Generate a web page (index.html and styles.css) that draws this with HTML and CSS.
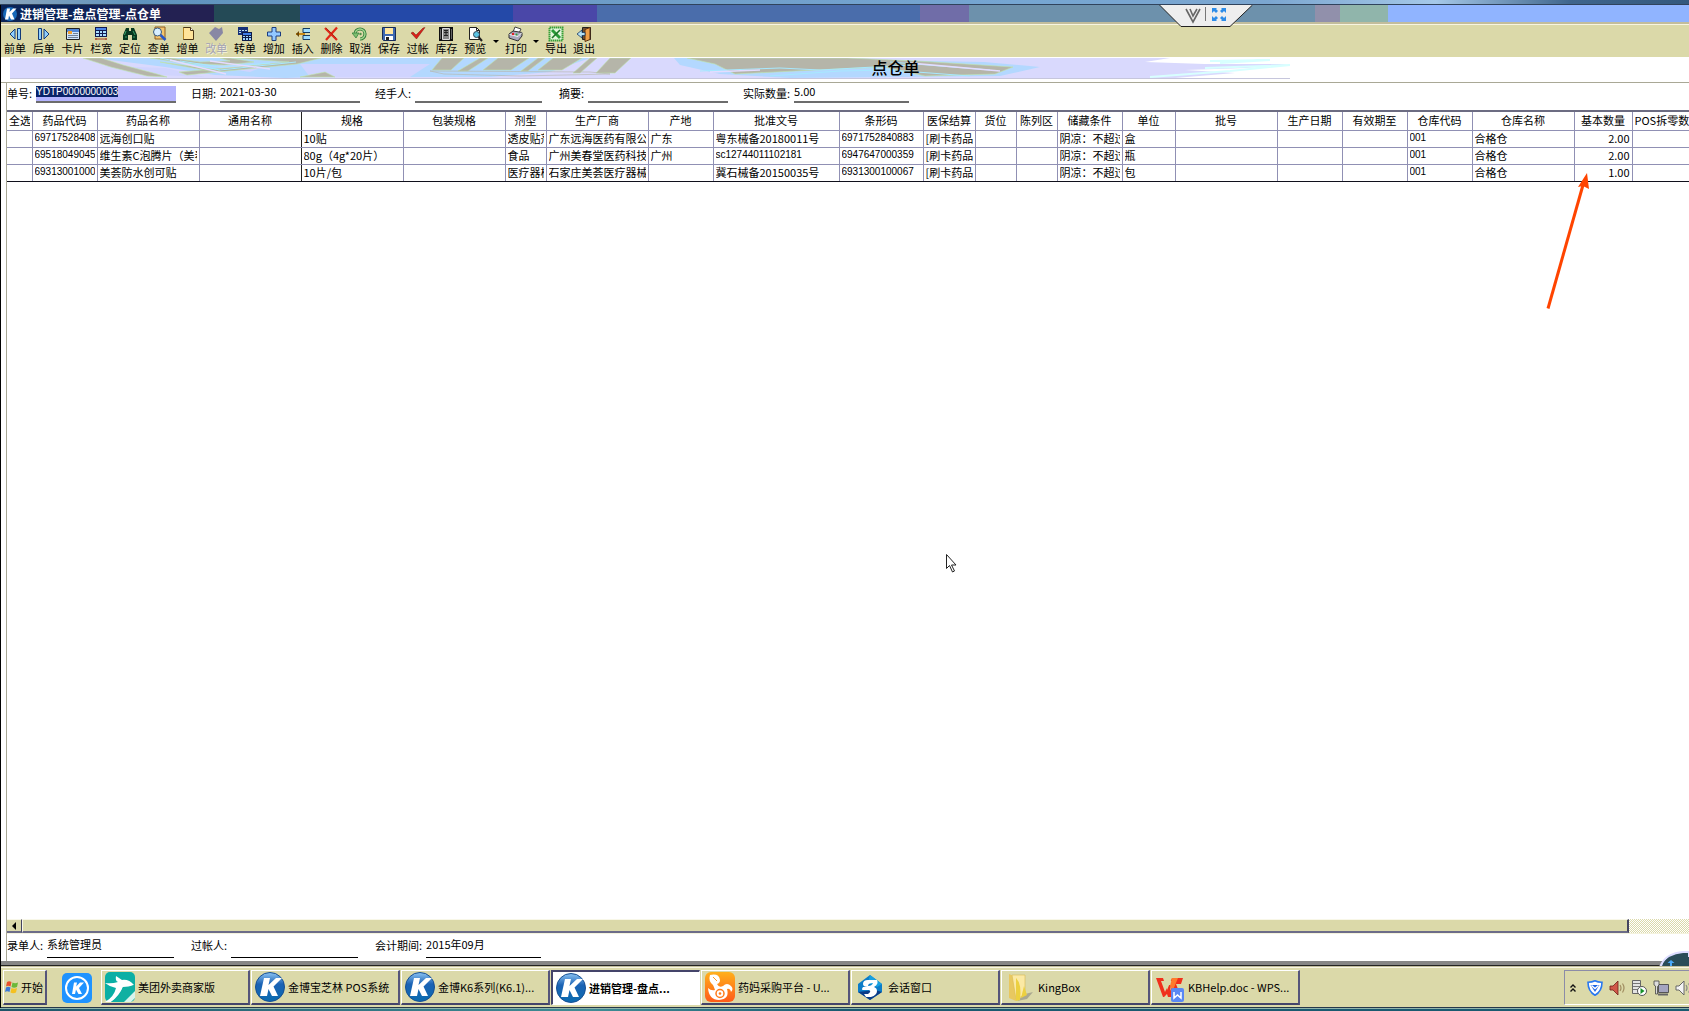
FILE: index.html
```
<!DOCTYPE html>
<html lang="zh-CN">
<head>
<meta charset="utf-8">
<title>进销管理-盘点管理-点仓单</title>
<link rel="stylesheet" href="styles.css">
</head>
<body>
<svg class="defs" aria-hidden="true">
  <defs>
    <linearGradient id="kblue" x1="0" y1="0" x2="0" y2="1"><stop offset="0" stop-color="#8cc4f4"/><stop offset=".4" stop-color="#1b62b4"/><stop offset="1" stop-color="#0a6cb0"/></linearGradient>
    <linearGradient id="orange" x1="0" y1="0" x2="0" y2="1"><stop offset="0" stop-color="#ffb01c"/><stop offset="1" stop-color="#ff5a18"/></linearGradient>
    <symbol id="kball" viewBox="0 0 30 30">
      <circle cx="15" cy="15" r="14.5" fill="url(#kblue)" stroke="#174f92"/>
      <path d="M9 6h6l-1.500 7L21 6h6l-8.500 8.500L23 24h-6l-3.500-7-1.500 7H5z" fill="#fff"/>
    </symbol>
  </defs>
</svg>
<div class="desktop-strip"></div>
<div class="window">
  <header class="titlebar">
    <svg class="title-icon" viewBox="0 0 14 14"><circle cx="7" cy="7" r="7" fill="#1768b8"/><path d="M4 1.500h3L6.500 5 10 1.500h3.500L9 6.500l2.500 6H8L6 8.500l-.7 4H2z" fill="#fff"/></svg>
    <h1>进销管理-盘点管理-点仓单</h1>
  </header>

  <nav class="toolbar">
    <div class="tool-group">
      <button class="tool"><svg viewBox="0 0 16 16"><path d="M8 3v10L3 8z" fill="#8fd0ff" stroke="#123a78"/><path d="M10.500 2.500h3v11h-3z" fill="#8fd0ff" stroke="#123a78"/></svg>前单</button>
      <button class="tool"><svg viewBox="0 0 16 16"><path d="M8 3v10l5-5z" fill="#8fd0ff" stroke="#123a78"/><path d="M2.500 2.500h3v11h-3z" fill="#8fd0ff" stroke="#123a78"/></svg>后单</button>
      <button class="tool"><svg viewBox="0 0 16 16"><path d="M1.500 2.500h13v11h-13z" fill="#cfe4fb" stroke="#222"/><path d="M2 3h12v3H2z" fill="#4f86d8"/><path d="M3 5h4v3H3z" fill="#f0a030"/><path d="M8 7.500h5M3 9.500h10M3 11.500h10" stroke="#6f8098"/></svg>卡片</button>
      <button class="tool"><svg viewBox="0 0 16 16"><path d="M2 1h12v10H2z" fill="#111a50"/><path d="M3 2h10v2H3z" fill="#4c86e8"/><path d="M3 5h3v2H3zm4 0h2v2H7zm3 0h3v2h-3zM3 8h3v2H3zm4 0h2v2H7zm3 0h3v2h-3z" fill="#a8dcff"/><path d="M2 13h12M3 12v2M13 12v2" stroke="#a23a20"/></svg>栏宽</button>
      <button class="tool"><svg viewBox="0 0 16 16"><path d="M4 2h3v3h2V2h3l3 7v5h-5V9H6v5H1V9z" fill="#083820"/><path d="M4 5 2.500 9M11 5l2 4M3 11h2M11 11h2" stroke="#35a068"/></svg>定位</button>
      <button class="tool"><svg viewBox="0 0 16 16"><path d="M4 1h10v12H4z" fill="#f5c56c" stroke="#8a5a20"/><circle cx="6.500" cy="6" r="4" fill="#d8efff" stroke="#35587c"/><path d="m9.500 9 5 5" stroke="#2858c8" stroke-width="2.500"/></svg>查单</button>
      <button class="tool"><svg viewBox="0 0 16 16"><path d="M3.500 1.500h7l3 3v9h-10z" fill="#ffe49a" stroke="#4c3818"/><path d="M3.500 2v11" stroke="#b88420"/><path d="M10.500 1.500v3h3" fill="#fff" stroke="#4c3818"/></svg>增单</button>
      <button class="tool off" disabled><svg viewBox="0 0 16 16"><path d="m1 7 6-6 4 2 3-2 1 6-7 8z" fill="#8988a4"/></svg>改单</button>
      <button class="tool"><svg viewBox="0 0 16 16"><path d="M1 1h10v8H1z" fill="#163078"/><path d="M2 4h2v1H2zm3 0h2v1H5zm3 0h2v1H8zM2 6h2v1H2zm3 0h2v1H5z" fill="#bde"/><path d="M5 6h10v9H5z" fill="#0e1c48"/><path d="M6 7h8v2H6z" fill="#3f7de8"/><path d="M6 10h2v1H6zm3 0h2v1H9zm3 0h2v1h-2zM6 12h2v2H6zm3 0h2v2H9zm3 0h2v2h-2z" fill="#9ed4ff"/></svg>转单</button>
      <button class="tool"><svg viewBox="0 0 16 16"><path d="M6 1.500h4V6h4.500v4H10v4.500H6V10H1.500V6H6z" fill="#92c8ff" stroke="#1a3c80"/></svg>增加</button>
      <button class="tool"><svg viewBox="0 0 16 16"><path d="M15 2.500H8v4h7M15 9.500H8v4h7" fill="#9edcff" stroke="#143a60"/><path d="M1 8h9" stroke="#c88a18" stroke-width="2"/><path d="M4 5v6L1 8z" fill="#6b4808"/></svg>插入</button>
      <button class="tool"><svg viewBox="0 0 16 16"><path d="m2 2 12 12M14 1.500 3 14" stroke="#e02818" stroke-width="2.200"/><path d="m3 2 10 10" stroke="#8c1810" stroke-width=".6"/></svg>删除</button>
      <button class="tool"><svg viewBox="0 0 16 16"><path d="M3 8a5 5 0 1 1 5 5" fill="none" stroke="#2d7a38" stroke-width="3.200"/><path d="M3 8a5 5 0 1 1 5 5" fill="none" stroke="#a5d890" stroke-width="1.400"/><path d="M0 7h7l-3 5z" fill="#7fbf70" stroke="#2d7a38" stroke-width=".7"/><circle cx="8.500" cy="8" r="1.200" fill="#4f9048"/></svg>取消</button>
      <button class="tool"><svg viewBox="0 0 16 16"><path d="M1.500 1.500h13v13h-12l-1-1z" fill="#3e68b0" stroke="#182c58"/><path d="M4 2h8v6H4z" fill="#ffe6a0"/><path d="M4 10h8v4H4z" fill="#fff"/><path d="M5 11h3v3H5z" fill="#222"/></svg>保存</button>
      <button class="tool"><svg viewBox="0 0 16 16"><path d="m1 7 2-1 3 3 7-7 2-.5L6.500 13z" fill="#d82018" stroke="#7a1810" stroke-width=".5"/></svg>过帐</button>
      <button class="tool"><svg viewBox="0 0 16 16"><path d="M1 1h14v14H1z" fill="#101010"/><path d="M4.500 2.500h7v11h-7z" fill="#888" stroke="#ddd"/><path d="M6 4.500h4M6 6.500h4M6 9.500h4M8 4v5" stroke="#222"/><path d="M2.500 3v10M13.500 3v10" stroke="#666"/></svg>库存</button>
      <button class="tool"><svg viewBox="0 0 16 16"><path d="M2.500 1.500h7l3 3v9h-10z" fill="#fff" stroke="#222"/><path d="M9.500 1.500v3h3" fill="none" stroke="#222"/><circle cx="9.500" cy="8.500" r="3" fill="#5cc4e4" stroke="#345"/><path d="m11.500 11 3.500 4" stroke="#222" stroke-width="2"/></svg>预览</button>
    </div>
    <button class="drop" aria-label="预览选项"></button>
    <button class="tool"><svg viewBox="0 0 16 16"><path d="m5 6 2-5 6 2-2 4z" fill="#fff" stroke="#444"/><path d="m1 8 4-3 9 1.500V10l-4 5-9-3z" fill="#a8a8bc" stroke="#333"/><path d="m1.500 8.500 8.500 2 4-4" stroke="#f4f4f4" fill="none"/><circle cx="5" cy="8" r="1.200" fill="#e02020"/><circle cx="8.500" cy="8.500" r="1" fill="#28a838"/></svg>打印</button>
    <button class="drop" aria-label="打印选项"></button>
    <button class="tool"><svg viewBox="0 0 16 16"><path d="M1.500 1.500h13v13h-13z" fill="#e4f6dc" stroke="#38a038" stroke-width="2" stroke-dasharray="1.500 .5"/><path d="m4 4 8 8" stroke="#2a9a38" stroke-width="3"/><path d="m12 4-8 8" stroke="#1c7428" stroke-width="1.600"/></svg>导出</button>
    <button class="tool"><svg viewBox="0 0 16 16"><path d="M6.500 1.500h8v12h-8z" fill="#705030" stroke="#222"/><path d="m9 3.500 5-2v12l-5 2z" fill="#f0a048" stroke="#5a3010"/><path d="M6 4 1 8l5 4v-2.500h3v-3H6z" fill="#b4e0f4" stroke="#1a3a60" stroke-width=".8"/></svg>退出</button>
  </nav>

  <div class="banner">
    <svg class="banner-art" viewBox="0 0 1280 20" preserveAspectRatio="none" aria-hidden="true">
      <path d="M0 0h1160l-25 4 60 2h85l-45 4-60 2 50 3-60 5H0z" fill="#d9d9fd"/>
      <path d="M85 0h400l-20 8-80 8-110 4-70-3-50-8zM330 0h250l-40 14-60 5-100 0zM664 0h90l220 4 56 5-40 9-210 2-70-4-40-9z" fill="#b3d8ff"/>
      <path d="M290 6h130l-20 13H300zM95 8l60 2 40 9-70-3zM200 8l60-2-20 8z" fill="#d0d4fe"/>
      <g fill="#b5b5a9" stroke="#bfe6ac" stroke-width=".6">
        <path d="M73 0h18l22 7 34 9 10 3-20-1-36-9z"/>
        <path d="m140 0 34 5 40 2 30-3-24-4h-10l10 3-30 1-30-4zM225 0h86l-24 6-60 6-50 5-8-3 60-5 50-5z"/>
        <path d="m290 19 25-5 10 5zM150 4l60 8-5 2z"/>
        <path d="M432 0h22l-13 12h-19z"/>
        <path d="M470 0h8l-20 13h-10zM488 0h31l-18 12h-28zM528 0h7l-17 13h-7zM543 0h29l-20 12h-24zM580 0h7l-17 15h-7zM600 0h21l-16 15h-19z"/>
        <path d="m420 13 160 1 20 2-90 2-76-2z" fill="none" stroke="#b5b5a9"/>
        <path d="M677 0h160l70 3 96 6-18 7-70 2-40-9-70 3-80 4-20-10z"/>
      </g>
      <path d="m170 3 40 6 50-4M150 0l60 12 76-8M690 13l80-3 40 2 90-5M760 18l70-5 50-1 80 6M880 4l100 8" fill="none" stroke="#a7e9ff"/>
      <path d="m160 2 56 14M200 3l60 8M700 14l50-2M900 5l90 8" fill="none" stroke="#e4dcff" stroke-width="1.500"/>
      <path d="m1200 3 60-1-50 3M1195 10l85-3-60 6-80 6" fill="none" stroke="#d8ffff" stroke-width="2"/>
    </svg>
    <h2>点仓单</h2>
  </div>

  <main class="sheet">
    <form class="fields fields-top">
      <div class="field"><label for="no">单号:</label><input id="no" class="w140 num current" value="YDTP0000000003"></div>
      <div class="field"><label for="date">日期:</label><input id="date" class="w140" value="2021-03-30"></div>
      <div class="field"><label for="agent">经手人:</label><input id="agent" class="w127"></div>
      <div class="field"><label for="memo">摘要:</label><input id="memo" class="w140"></div>
      <div class="field"><label for="qty">实际数量:</label><input id="qty" class="w115" value="5.00"></div>
    </form>

    <div class="grid-pane">
      <table>
        <colgroup>
          <col class="c25"><col class="c65"><col class="c102"><col class="c102"><col class="c102"><col class="c102"><col class="c41"><col class="c102"><col class="c65"><col class="c126"><col class="c84"><col class="c52"><col class="c41"><col class="c41"><col class="c65"><col class="c53"><col class="c102"><col class="c65"><col class="c65"><col class="c65"><col class="c102"><col class="c58"><col class="c84">
        </colgroup>
        <thead>
          <tr><th>全选</th><th>药品代码</th><th>药品名称</th><th class="frozen">通用名称</th><th>规格</th><th>包装规格</th><th>剂型</th><th>生产厂商</th><th>产地</th><th>批准文号</th><th>条形码</th><th>医保结算</th><th>货位</th><th>陈列区</th><th>储藏条件</th><th>单位</th><th>批号</th><th>生产日期</th><th>有效期至</th><th>仓库代码</th><th>仓库名称</th><th>基本数量</th><th class="cut">POS拆零数量</th></tr>
        </thead>
        <tbody>
          <tr><td></td><td class="num">6971752840883</td><td>远海创口贴</td><td class="frozen"></td><td>10贴</td><td></td><td>透皮贴剂</td><td>广东远海医药有限公司</td><td>广东</td><td>粤东械备20180011号</td><td class="num">6971752840883</td><td>[刷卡药品</td><td></td><td></td><td>阴凉：不超过</td><td>盒</td><td></td><td></td><td></td><td class="num">001</td><td>合格仓</td><td class="right">2.00</td><td></td></tr>
          <tr><td></td><td class="num">6951804904545</td><td>维生素C泡腾片（美春</td><td class="frozen"></td><td>80g（4g*20片）</td><td></td><td>食品</td><td>广州美春堂医药科技</td><td>广州</td><td class="num">sc12744011102181</td><td class="num">6947647000359</td><td>[刷卡药品</td><td></td><td></td><td>阴凉：不超过</td><td>瓶</td><td></td><td></td><td></td><td class="num">001</td><td>合格仓</td><td class="right">2.00</td><td></td></tr>
          <tr><td></td><td class="num">6931300100067</td><td>美荟防水创可贴</td><td class="frozen"></td><td>10片/包</td><td></td><td>医疗器械</td><td>石家庄美荟医疗器械</td><td></td><td>冀石械备20150035号</td><td class="num">6931300100067</td><td>[刷卡药品</td><td></td><td></td><td>阴凉：不超过</td><td>包</td><td></td><td></td><td></td><td class="num">001</td><td>合格仓</td><td class="right">1.00</td><td></td></tr>
        </tbody>
      </table>
    </div>

    <div class="scrollbar">
      <button class="scroll-left" aria-label="向左滚动"></button>
      <div class="track"><div class="thumb"></div></div>
    </div>

    <form class="fields fields-bottom">
      <div class="field"><label for="maker">录单人:</label><input id="maker" class="w127" value="系统管理员"></div>
      <div class="field"><label for="poster">过帐人:</label><input id="poster" class="w127"></div>
      <div class="field"><label for="period">会计期间:</label><input id="period" class="w115" value="2015年09月"></div>
    </form>
  </main>

  <footer class="taskbar">
    <button class="start"><svg viewBox="0 0 14 14"><path d="M2 2q2-1.500 4.500 0L5.500 6.500Q3 5 1 6.500z" fill="#e8502c"/><path d="M7.500 2.500q2.500 1.500 5.500 0L12 7Q9 8.500 6.500 7z" fill="#6cb838"/><path d="M1 7.500q2-1.500 4.500 0L4.500 12Q2 10.500 0 12z" fill="#3a78d8"/><path d="M6.500 8q2.500 1.500 5.500 0l-1 4.500Q8 14 5.500 12.500z" fill="#f4c020"/></svg>开始</button>
    <button class="quick" aria-label="K"><svg viewBox="0 0 30 30"><rect width="30" height="30" rx="5" fill="#1f93ff"/><circle cx="15" cy="15" r="11" fill="none" stroke="#fff" stroke-width="2"/><path d="M12 9.500h3l-.8 4L18 9.500h4L17 15l3 6h-3.500L14 16.500l-1 4.500h-3z" fill="#fff"/></svg></button>
    <div class="tasks">
      <button class="task"><svg viewBox="0 0 30 30"><rect width="30" height="30" rx="5" fill="#0aafa5"/><path d="M0 11q7 1 13-1-3-1-2-6l6 4q7-1 12 5-5 2-11 2-4 9-12 15H0q9-5 11-14-6-1-11-5" fill="#fff"/><path d="M6 30q10-6 12-15 6 1 11-2l1 7-11 10z" fill="#10b0a2"/><path d="M19 30 30 19v7l-4 4z" fill="#d8f4ec"/></svg><span>美团外卖商家版</span></button>
      <button class="task"><svg><use href="#kball"/></svg><span>金博宝芝林 POS系统</span></button>
      <button class="task"><svg><use href="#kball"/></svg><span>金博K6系列(K6.1)...</span></button>
      <button class="task active"><svg><use href="#kball"/></svg><span>进销管理-盘点...</span></button>
      <button class="task"><svg viewBox="0 0 30 30"><rect width="30" height="30" rx="6" fill="url(#orange)"/><path d="M5 3q9-2 10 5 0 3-3 4 2 4 6 2 4-4 8 0 3 3 0 6-1-4-4-3 3 10-8 11Q4 28 3 16q3 3 7 2-1-3-2-5Q3 9 5 3" fill="#fff"/><circle cx="15" cy="21.500" r="4" fill="#fff" stroke="#ff7a18" stroke-width="1.500"/><circle cx="15" cy="21.500" r="1.300" fill="#ff7a18"/><path d="m8 5 4 4" stroke="#ff9a20"/></svg><span>药妈采购平台 - U...</span></button>
      <button class="task"><svg viewBox="0 0 30 30"><path d="m15 3 12 9v8l-12 8-12-8v-8z" fill="#0c7cc8"/><path d="m15 3 12 9-5 3-9-4z" fill="#18a0e0"/><path d="m3 20 12 8 12-8-7-2z" fill="#0a3c88"/><path d="M22 8h-9q-5 0-5 4 0 3 5 3h-5q-2 3 0 3h6q3 1-1 4H9l2 3h5q6-2 6-6 0-3-3-4 5-3 3-7m-4 3q-1 3-5 3 0-3 5-3" fill="#fff"/></svg><span>会话窗口</span></button>
      <button class="task"><svg viewBox="0 0 30 30"><path d="m4 2 7 3v24l-7-3z" fill="#e8c860"/><path d="M7 3h13v20l-9 4z" fill="#fbe9a4" stroke="#d8b850" stroke-width=".6"/><path d="m20 22 8-2-6 7-10 2z" fill="#aaa890"/><path d="M11 6q6 6 4 22l-4 1zM19 14l3 9-6 3z" fill="#ecd040"/></svg><span>KingBox</span></button>
      <button class="task"><svg viewBox="0 0 30 30"><path d="M1 6h7l4 12 5-12h11l-2 6h-5l2 5-6 8h-4l-1-3-3 3H8z" fill="#f0301c"/><path d="m6 9 4 11 3-7h3l-1 6 5-10z" fill="#dbd9a9"/><path d="M17 6h6l-5 12-3-4z" fill="#ff7a2c"/><rect x="16" y="16" width="13" height="14" rx="2" fill="#5a88f4"/><path d="M19 20v6l3.500-3 3.500 3v-6" fill="none" stroke="#fff" stroke-width="1.500"/></svg><span>KBHelp.doc - WPS...</span></button>
    </div>
    <div class="tray">
      <svg viewBox="0 0 16 16"><path d="m5.500 7.500 2.500-2.500 2.500 2.500M5.500 11.500 8 9l2.500 2.500" fill="none" stroke="#111" stroke-width="1.400"/></svg>
      <svg viewBox="0 0 16 16"><path d="M8 .8q3 1.600 7 1.500 0 9-7 13-7-4-7-13 4 0 7-1.500z" fill="#fff" stroke="#2878f0" stroke-width="1.600"/><path d="M3.500 5h9L8 12z" fill="#1c64e4"/><path d="m4.500 5.500 3.500 3 3.500-3" stroke="#fff" stroke-width="1.500" fill="none"/></svg>
      <svg viewBox="0 0 16 16"><path d="M1 6h3l5-5v14L4 10H1z" fill="#d05848" stroke="#702018" stroke-width=".8"/><path d="M11 5q2 3 0 6M13.500 3.500q3 4.500 0 9" fill="none" stroke="#a08c60" stroke-width="1.200"/></svg>
      <svg viewBox="0 0 16 16"><path d="M1.500.5h8v13h-8z" fill="#e4e4e4" stroke="#666"/><path d="M2 3.500h7M2 6.500h7M2 9.500h5" stroke="#777"/><circle cx="11" cy="11" r="4.500" fill="#fff" stroke="#555"/><path d="M9.500 8v6l4-3z" fill="#149028"/></svg>
      <svg viewBox="0 0 16 16"><path d="M5.500 4.500h10v8h-10z" fill="#a4a4c0" stroke="#555"/><path d="M5 14.500h10" stroke="#666" stroke-width="2"/><path d="M1 1h5v4L4.500 6.500V14h-2V6L1 5z" fill="#ddd" stroke="#444" stroke-width=".8"/></svg>
      <svg viewBox="0 0 16 16"><path d="M1 6h3l5-5v14L4 10H1z" fill="#f4f4f4" stroke="#666"/><path d="M11 5q2 3 0 6M13.500 3.500q3 4.500 0 9" fill="none" stroke="#888" stroke-width="1.200"/></svg>
    </div>
  </footer>
</div>
<div class="desktop-foot"></div>

<svg class="remote-bar" viewBox="0 0 94 23" aria-hidden="true">
  <path d="M.5 0 22 21.500h49L93.500 0z" fill="#eee"/><path d="M.5 0 22 21.500h49L93.500 0" fill="none" stroke="#222"/>
  <path d="m27 4 7 13 7-13M31 4l3 7 4-7" fill="none" stroke="#666" stroke-width="1.600"/>
  <path d="M46.500 2v14" stroke="#777"/>
  <g fill="#2c8ce8"><path d="M53 3h5l-1 1 2 2-2 2-2-2-2 2zM67 3h-5l1 1-2 2 2 2 2-2 2 2zM53 16h5l-1-1 2-2-2-2-2 2-2-2zM67 16h-5l1-1-2-2 2-2 2 2 2-2z"/></g>
</svg>
<svg class="float-ball" viewBox="0 0 30 15" aria-hidden="true"><path d="M2 14Q8 2 24 1h6v14z" fill="#2a4c58" stroke="#dcdcff" stroke-width="2"/><path d="M3 15q2-6 8-9h19v9z" fill="#2a4c58"/><path d="m12 9 3.500 3H13v3h-2v-3H8.500z" fill="#4aa8f8"/></svg>
<svg class="note-arrow" viewBox="0 0 44 138" aria-hidden="true"><path d="M2 135.500 37 12" stroke="#ff4400" stroke-width="3"/><path d="m41 0 2 16-6-3-5 1z" fill="#ff4400"/></svg>
<svg class="pointer" viewBox="0 0 12 21" aria-hidden="true"><path d="M1.500 1.500v14l3-3 3 6.500 2-1-3-6h4.500z" fill="#fff" stroke="#222"/></svg>
<script>
  document.getElementById('no').select();
</script>
</body>
</html>
```
FILE: styles.css
```
* { box-sizing: border-box; }
html, body { height: 100%; }
body {
  margin: 0;
  display: flex;
  flex-direction: column;
  position: relative;
  overflow: hidden;
  background: #fff;
  color: #000;
  font-family: "Noto Sans CJK SC", "Liberation Sans", sans-serif;
  font-size: 11px;
  line-height: 14px;
}
button, input { font: inherit; color: inherit; padding: 0; border: 0; border-radius: 0; }
button { background: none; }
h1, h2 { margin: 0; }
.defs { position: absolute; width: 0; height: 0; }

.desktop-strip {
  flex: none;
  height: 5px;
  border-bottom: 1px solid #30435c;
  background: linear-gradient(90deg, #8aa5bd 0, #5f93bd 8%, #6f9ec9 40%, #76a6d2 60%, #7ba6d0 75%, #a5c8e8 85%, #3f658c 93%, #34587c 100%);
}
.window {
  flex: 1;
  min-height: 0;
  display: flex;
  flex-direction: column;
  border-left: 1px solid #000;
}

.titlebar {
  flex: none;
  display: flex;
  align-items: center;
  gap: 3px;
  height: 17px;
  padding-left: 2px;
  color: #fff;
  background: linear-gradient(90deg, #0a2458 0, #0a2458 66px, #232152 170px, #232152 213px, #244a56 213px, #244a56 299px, #2449a8 299px, #2449a8 512px, #4a47a8 512px, #4a47a8 596px, #4a6dab 596px, #4a6dab 919px, #706da8 919px, #706da8 968px, #6d91ac 968px, #6d91ac 1314px, #9190ab 1314px, #9190ab 1339px, #90b5ab 1339px, #90b5ab 1387px, #90b4ff 1387px);
}
.titlebar h1 { font-size: 12px; line-height: 16px; font-weight: bold; }
.title-icon { width: 14px; height: 14px; }

.toolbar {
  flex: none;
  display: flex;
  align-items: flex-start;
  height: 35px;
  padding-top: 1px;
  border-top: 2px solid #c2bd9c;
  background: #dbd9a9;
  box-shadow: inset 0 1px #f7f5e2;
}
.tool-group { display: grid; grid-template-columns: repeat(17, 1fr); width: 489px; }
.tool { display: flex; flex-direction: column; align-items: center; width: 28px; line-height: 13px; white-space: nowrap; }
.tool svg { width: 16px; height: 16px; margin-top: 1px; }
.tool.off { color: #a3a2b4; text-shadow: 1px 1px #f4f2dc; }
.drop { display: flex; width: 12px; height: 32px; align-items: center; justify-content: center; }
.drop::before { content: ""; border: 3px solid transparent; border-top-color: #000; border-bottom: 0; }

.banner {
  flex: none;
  position: relative;
  height: 26px;
  padding: 1px 0 0 101px;
  border-bottom: 1px solid #a9a896;
}
.banner-art { position: absolute; left: 9px; top: 1px; width: 1280px; height: 21px; border-bottom: 1px solid #c6c6dc; }
.banner h2 { position: relative; text-align: center; font-size: 16px; line-height: 18px; font-weight: 500; }

.sheet {
  flex: 1;
  min-height: 0;
  display: flex;
  flex-direction: column;
  margin-left: 5px;
  border-left: 1px solid #a9a896;
}
.fields { flex: none; display: grid; grid-template-columns: repeat(5, 184px); height: 27px; }
.fields-top { padding-top: 3px; }
.fields-bottom { padding-top: 4px; }
.field { display: flex; align-items: flex-start; gap: 4px; }
.field label { white-space: nowrap; line-height: 14px; }
.field input { height: 17px; line-height: 12px; padding-bottom: 5px; border-bottom: 2px solid #6c6c6c; background: none; outline: 0; }
.fields-bottom input { height: 20px; padding-bottom: 7px; border-bottom: 1px solid #000; }
.field input.current { background: #b4b4fe; }
.field input::selection { background: #0a246a; color: #fff; }
.w115 { width: 115px; }
.w127 { width: 127px; }
.w140 { width: 140px; }

.grid-pane { flex: 1; min-height: 0; overflow: hidden; border-top: 2px solid #6c6c82; }
table { table-layout: fixed; width: 1709px; border-collapse: collapse; border-bottom: 1px solid #10101c; }
th, td {
  height: 17px;
  padding: 0 2px;
  overflow: clip;
  overflow-clip-margin: content-box;
  white-space: nowrap;
  font-weight: normal;
  line-height: 14px;
  text-align: left;
  vertical-align: top;
  border-right: 1px solid #9090b4;
  border-bottom: 1px solid #9090b4;
}
th { height: 18px; line-height: 16px; text-align: center; }
th:first-child, th.cut { text-align: left; }
tbody tr:last-child td { border-bottom-color: #10101c; }
th.frozen, td.frozen { border-right-color: #222; }
.num, .field input.num { font-family: "Liberation Sans", sans-serif; font-size: 10px; }
.right { text-align: right; }
.c25 { width: 25px; }
.c41 { width: 41px; }
.c52 { width: 52px; }
.c53 { width: 53px; }
.c58 { width: 58px; }
.c65 { width: 65px; }
.c84 { width: 84px; }
.c102 { width: 102px; }
.c126 { width: 126px; }

.scrollbar { flex: none; display: flex; height: 15px; background: #dbd9a9; border-bottom: 1px solid #f4f3de; }
.scroll-left { width: 15px; border-right: 1px solid #444460; border-bottom: 2px solid #6c6c88; border-top: 1px solid #f8f7e8; display: flex; align-items: center; justify-content: center; }
.scroll-left::before { content: ""; border: 4px solid transparent; border-right-color: #000; border-left: 0; }
.track { flex: 1; padding-right: 60px; background: repeating-conic-gradient(#fff 0 25%, #dbd9a9 0 50%) 0 0 / 2px 2px; }
.thumb { height: 14px; background: #dbd9a9; border: 1px solid #f8f7e8; border-bottom: 2px solid #6c6c88; border-right: 2px solid #444460; }

.taskbar {
  flex: none;
  display: flex;
  align-items: center;
  height: 47px;
  padding: 5px 0 2px 2px;
  border-top: 4px solid #858585;
  border-bottom: 1px solid #26384a;
  background: #dbd9a9;
  box-shadow: inset 0 1px #222, inset 0 2px #c2bd9c, inset 0 3px #f7f5e2;
}
.start, .task { height: 35px; border: 1px solid #fff; border-right: 2px solid #55557a; border-bottom: 2px solid #44446a; }
.start { display: flex; align-items: center; gap: 2px; width: 44px; padding-left: 1px; }
.start svg { width: 14px; height: 14px; }
.quick { width: 30px; height: 30px; margin: 0 9px 0 15px; }
.quick svg { display: block; }
.tasks { display: flex; gap: 1px; }
.task { display: flex; align-items: center; gap: 3px; width: 149px; padding-left: 3px; white-space: nowrap; }
.task svg { flex: none; width: 30px; height: 30px; }
.task.active { background: #fff; font-weight: bold; border: 1px solid #fff; border-top: 2px solid #44446a; border-left: 2px solid #44446a; }
.tray {
  display: flex;
  align-items: center;
  gap: 6px;
  height: 35px;
  width: 125px;
  margin-left: auto;
  overflow: hidden;
  border: 1px solid #8c8ca8;
  border-right: 0;
  border-bottom-color: #fff;
}
.tray svg { flex: none; width: 16px; height: 16px; }
.desktop-foot { flex: none; height: 3px; border-top: 1px solid #8fb4ac; background: linear-gradient(90deg, #1e5468, #3f8c94 35%, #1a5a70 50%, #1a5a70); }

.remote-bar { position: absolute; left: 1159px; top: 5px; width: 94px; height: 23px; }
.float-ball { position: absolute; right: 0; bottom: 45px; width: 30px; height: 15px; }
.note-arrow { position: absolute; left: 1546px; top: 173px; width: 44px; height: 138px; }
.pointer { position: absolute; left: 945px; top: 553px; width: 12px; height: 21px; }
```
